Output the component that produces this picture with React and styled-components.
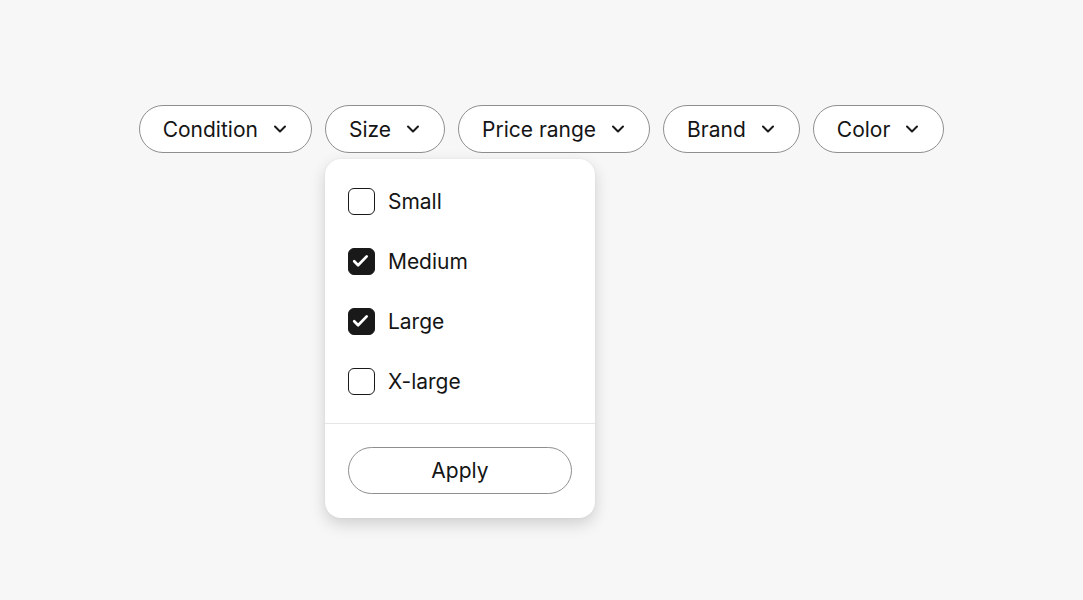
import styled, { createGlobalStyle } from "styled-components";
import { useState } from "react";

const GlobalStyle = createGlobalStyle`
    html, body {
        margin: 0;
        background: #f7f7f7;
        font-family: Inter, "Noto Sans", sans-serif;
        color: #191919;
    }
`

const filters = ["Condition", "Size", "Price range", "Brand", "Color"]
const sizes = [
    { label: "Small", checked: false },
    { label: "Medium", checked: true },
    { label: "Large", checked: true },
    { label: "X-large", checked: false },
]

const Chevron = () => (
    <svg width="14" height="14" viewBox="0 0 14 14" fill="none">
        <path d="M2 4.5l5 5 5-5" stroke="#191919" strokeWidth="2" strokeLinecap="round" strokeLinejoin="round" />
    </svg>
)

const Check = () => (
    <svg width="24" height="24" viewBox="0 0 24 24" fill="none">
        <path d="M5.2 12.3l3.9 3.9 8.6-8.8" stroke="#fff" strokeWidth="2.7" strokeLinecap="round" strokeLinejoin="round" />
    </svg>
)

const App = () => {
    const [checked, setChecked] = useState(sizes.map(s => s.checked))
    const toggle = (i) => setChecked(c => c.map((v, j) => (j === i ? !v : v)))

    return <Page>
        <GlobalStyle />
        <FilterBar>
            {filters.map(name => (
                <FilterItem key={name}>
                    <Pill>
                        {name}
                        <Chevron />
                    </Pill>
                    {name === "Size" && <Dropdown>
                        <Options>
                            {sizes.map((s, i) => (
                                <Option key={s.label} onClick={() => toggle(i)}>
                                    <Box $checked={checked[i]}>{checked[i] && <Check />}</Box>
                                    {s.label}
                                </Option>
                            ))}
                        </Options>
                        <Footer>
                            <ApplyButton>Apply</ApplyButton>
                        </Footer>
                    </Dropdown>}
                </FilterItem>
            ))}
        </FilterBar>
    </Page>
}

const Page = styled.div`
    width: 1083px;
    height: 600px;
    padding-top: 105px;
    box-sizing: border-box;
`
const FilterBar = styled.div`
    display: flex;
    justify-content: center;
    gap: 13px;
`
const FilterItem = styled.div`
    position: relative;
`
const Pill = styled.button`
    display: flex;
    align-items: center;
    gap: 15px;
    height: 48px;
    padding: 0 24px 0 23px;
    border: 1px solid #8f8f8f;
    border-radius: 24px;
    background: #fff;
    font-family: inherit;
    font-size: 21px;
    color: #151515;
    cursor: pointer;
`
const Dropdown = styled.div`
    position: absolute;
    top: 54px;
    left: 0;
    width: 270px;
    background: #fff;
    border-radius: 16px;
    box-shadow: 0 6px 16px rgba(0, 0, 0, 0.16), 0 0 3px rgba(0, 0, 0, 0.05);
    z-index: 2;
`
const Options = styled.div`
    padding: 12px 23px;
    border-bottom: 1px solid #e5e5e5;
`
const Option = styled.label`
    display: flex;
    align-items: center;
    gap: 13px;
    height: 60px;
    font-size: 21px;
    color: #151515;
    cursor: pointer;
`
const Box = styled.span`
    display: flex;
    align-items: center;
    justify-content: center;
    width: 27px;
    height: 27px;
    box-sizing: border-box;
    border-radius: 6px;
    border: 1.5px solid #191919;
    background: ${p => (p.$checked ? "#191919" : "#fff")};
`
const Footer = styled.div`
    padding: 23px 23px 24px;
`
const ApplyButton = styled.button`
    width: 100%;
    height: 47px;
    border: 1px solid #8f8f8f;
    border-radius: 24px;
    background: #fff;
    font-family: inherit;
    font-size: 21px;
    color: #151515;
    cursor: pointer;
`

export default App;
